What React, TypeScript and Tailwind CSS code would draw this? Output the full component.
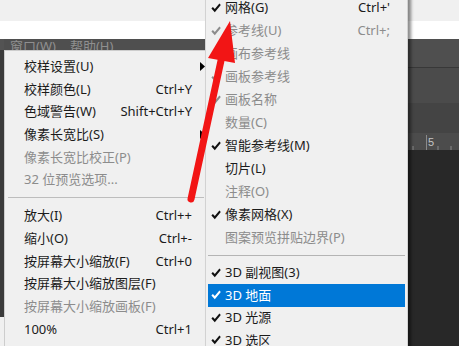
import React from "react";

type Item = {
  label?: string;
  shortcut?: string;
  sub?: boolean;
  disabled?: boolean;
  checked?: boolean;
  active?: boolean;
  sep?: boolean;
};

const leftItems: Item[] = [
  { label: "校样设置(U)", sub: true },
  { label: "校样颜色(L)", shortcut: "Ctrl+Y" },
  { label: "色域警告(W)", shortcut: "Shift+Ctrl+Y" },
  { label: "像素长宽比(S)", sub: true },
  { label: "像素长宽比校正(P)", disabled: true },
  { label: "32 位预览选项...", disabled: true },
  { sep: true },
  { label: "放大(I)", shortcut: "Ctrl++" },
  { label: "缩小(O)", shortcut: "Ctrl+-" },
  { label: "按屏幕大小缩放(F)", shortcut: "Ctrl+0" },
  { label: "按屏幕大小缩放图层(F)" },
  { label: "按屏幕大小缩放画板(F)", disabled: true },
  { label: "100%", shortcut: "Ctrl+1" },
];

const rightTop: Item[] = [
  { label: "网格(G)", shortcut: "Ctrl+'", checked: true },
  { label: "参考线(U)", shortcut: "Ctrl+;", checked: true, disabled: true },
  { label: "画布参考线", checked: true, disabled: true },
  { label: "画板参考线", checked: true, disabled: true },
  { label: "画板名称", checked: true, disabled: true },
  { label: "数量(C)", disabled: true },
  { label: "智能参考线(M)", checked: true },
  { label: "切片(L)" },
  { label: "注释(O)", disabled: true },
  { label: "像素网格(X)", checked: true },
  { label: "图案预览拼贴边界(P)", disabled: true },
];

const rightBottom: Item[] = [
  { label: "3D 副视图(3)", checked: true },
  { label: "3D 地面", checked: true, active: true },
  { label: "3D 光源", checked: true },
  { label: "3D 选区", checked: true },
];

const Check = ({ color }: { color: string }) => (
  <svg width="10" height="10" viewBox="0 0 10 10">
    <path d="M0.4 5.6 L1.9 4.1 L3.8 6.1 L8.4 0.6 L9.8 1.9 L3.8 9.2 Z" fill={color} />
  </svg>
);

const SubArrow = () => (
  <svg width="5" height="9" viewBox="0 0 5 9">
    <path d="M0 0 L5 4.5 L0 9 Z" fill="#000" />
  </svg>
);

const LeftMenu = () => (
  <div className="absolute left-[4px] top-[50px] w-[203px] h-[310px] bg-[#f0f0f0] border border-[#cdcdcd] pt-[4px] pl-[3px] pr-[1px]">
    {leftItems.map((it, i) =>
      it.sep ? (
        <div key={i} className="h-[13.3px] flex items-center pr-[1px]">
          <div className="h-px w-full bg-[#bdbdbd]" />
        </div>
      ) : (
        <div
          key={i}
          className={`h-[22.7px] flex items-center pl-[16px] ${it.disabled ? "text-[#8c8c8c]" : "text-[#1b1b1b]"}`}
        >
          <span className="flex-1 whitespace-nowrap">{it.label}</span>
          {it.shortcut && <span className="whitespace-nowrap">{it.shortcut}</span>}
          <span className="w-[13px] flex justify-end">{it.sub && <SubArrow />}</span>
        </div>
      )
    )}
  </div>
);

const RightRow = ({ it, h }: { it: Item; h: string }) => {
  const color = it.active ? "text-white" : it.disabled ? "text-[#8c8c8c]" : "text-[#1b1b1b]";
  const checkColor = it.active ? "#ffffff" : it.disabled ? "#8c8c8c" : "#111111";
  return (
    <div className={`${h} flex items-center pl-[3px] pr-[15px] ${color} ${it.active ? "bg-[#0078d7]" : ""}`}>
      <span className="w-[10px] flex items-center">{it.checked && <Check color={checkColor} />}</span>
      <span className="ml-[4px] flex-1 whitespace-nowrap">{it.label}</span>
      {it.shortcut && <span className="whitespace-nowrap">{it.shortcut}</span>}
    </div>
  );
};

const RightMenu = () => (
  <div className="absolute left-[205px] top-[-7px] w-[203px] h-[370px] bg-[#f0f0f0] border border-[#d2d2d2] pt-[2px] px-[2px] shadow-[3px_0_3px_rgba(0,0,0,0.45)]">
    {rightTop.map((it, i) => (
      <RightRow key={i} it={it} h="h-[23px]" />
    ))}
    <div className="h-[12.6px] flex items-center">
      <div className="h-px w-full bg-[#b4b4b4]" />
    </div>
    {rightBottom.map((it, i) => (
      <RightRow key={i} it={it} h="h-[22.5px]" />
    ))}
  </div>
);

export default function App() {
  return (
    <div className="relative w-[459px] h-[346px] overflow-hidden bg-[#282828] text-[13px] leading-none font-['Noto_Sans','Noto_Sans_CJK_SC',sans-serif]">
      {/* background: app chrome behind the menus */}
      <div className="flex flex-col h-full">
        <div className="h-[21px] bg-[#f0f0f0]" />
        <div className="h-[18px] bg-white" />
        <div className="flex flex-1">
          <div className="w-[4px] flex flex-col">
            <div className="h-[11px] bg-[#535353]" />
            <div className="h-[267px] bg-[#3b3b3b]" />
            <div className="flex-1 bg-[#f0f0f0]" />
          </div>
          <div className="flex-1 flex flex-col">
            <div className="h-[28px] bg-[#4f4f4f] pt-[1px] pl-[6px] flex gap-[14px] text-[#8f8f8f]">
              <span>窗口(W)</span>
              <span>帮助(H)</span>
            </div>
            <div className="h-px bg-[#383838]" />
            <div className="h-[35px] bg-[#4b4b4b]" />
            <div className="h-[30px] bg-[#444444]" />
            <div className="h-[17px] bg-[#4c4c4c] flex justify-end">
              <svg width="48" height="17" viewBox="0 0 48 17">
                <line x1="2" y1="13" x2="2" y2="17" stroke="#8a8a8a" strokeWidth="1" />
                <line x1="15.5" y1="2" x2="15.5" y2="17" stroke="#8a8a8a" strokeWidth="1" />
                <text x="17" y="13" fill="#c4c4c4" fontSize="11" fontFamily="Liberation Sans, sans-serif">5</text>
                <line x1="27" y1="13" x2="27" y2="17" stroke="#8a8a8a" strokeWidth="1" />
                <line x1="40" y1="13" x2="40" y2="17" stroke="#8a8a8a" strokeWidth="1" />
              </svg>
            </div>
            <div className="flex-1 bg-[#282828]" />
          </div>
        </div>
      </div>

      <LeftMenu />
      <RightMenu />

      {/* red annotation arrow */}
      <svg className="absolute left-0 top-0 pointer-events-none" width="459" height="346" viewBox="0 0 459 346">
        <line x1="191" y1="199" x2="222" y2="56" stroke="#f21515" strokeWidth="7" strokeLinecap="round" />
        <polygon points="230,21 208,58 235,63" fill="#f21515" />
      </svg>
    </div>
  );
}
